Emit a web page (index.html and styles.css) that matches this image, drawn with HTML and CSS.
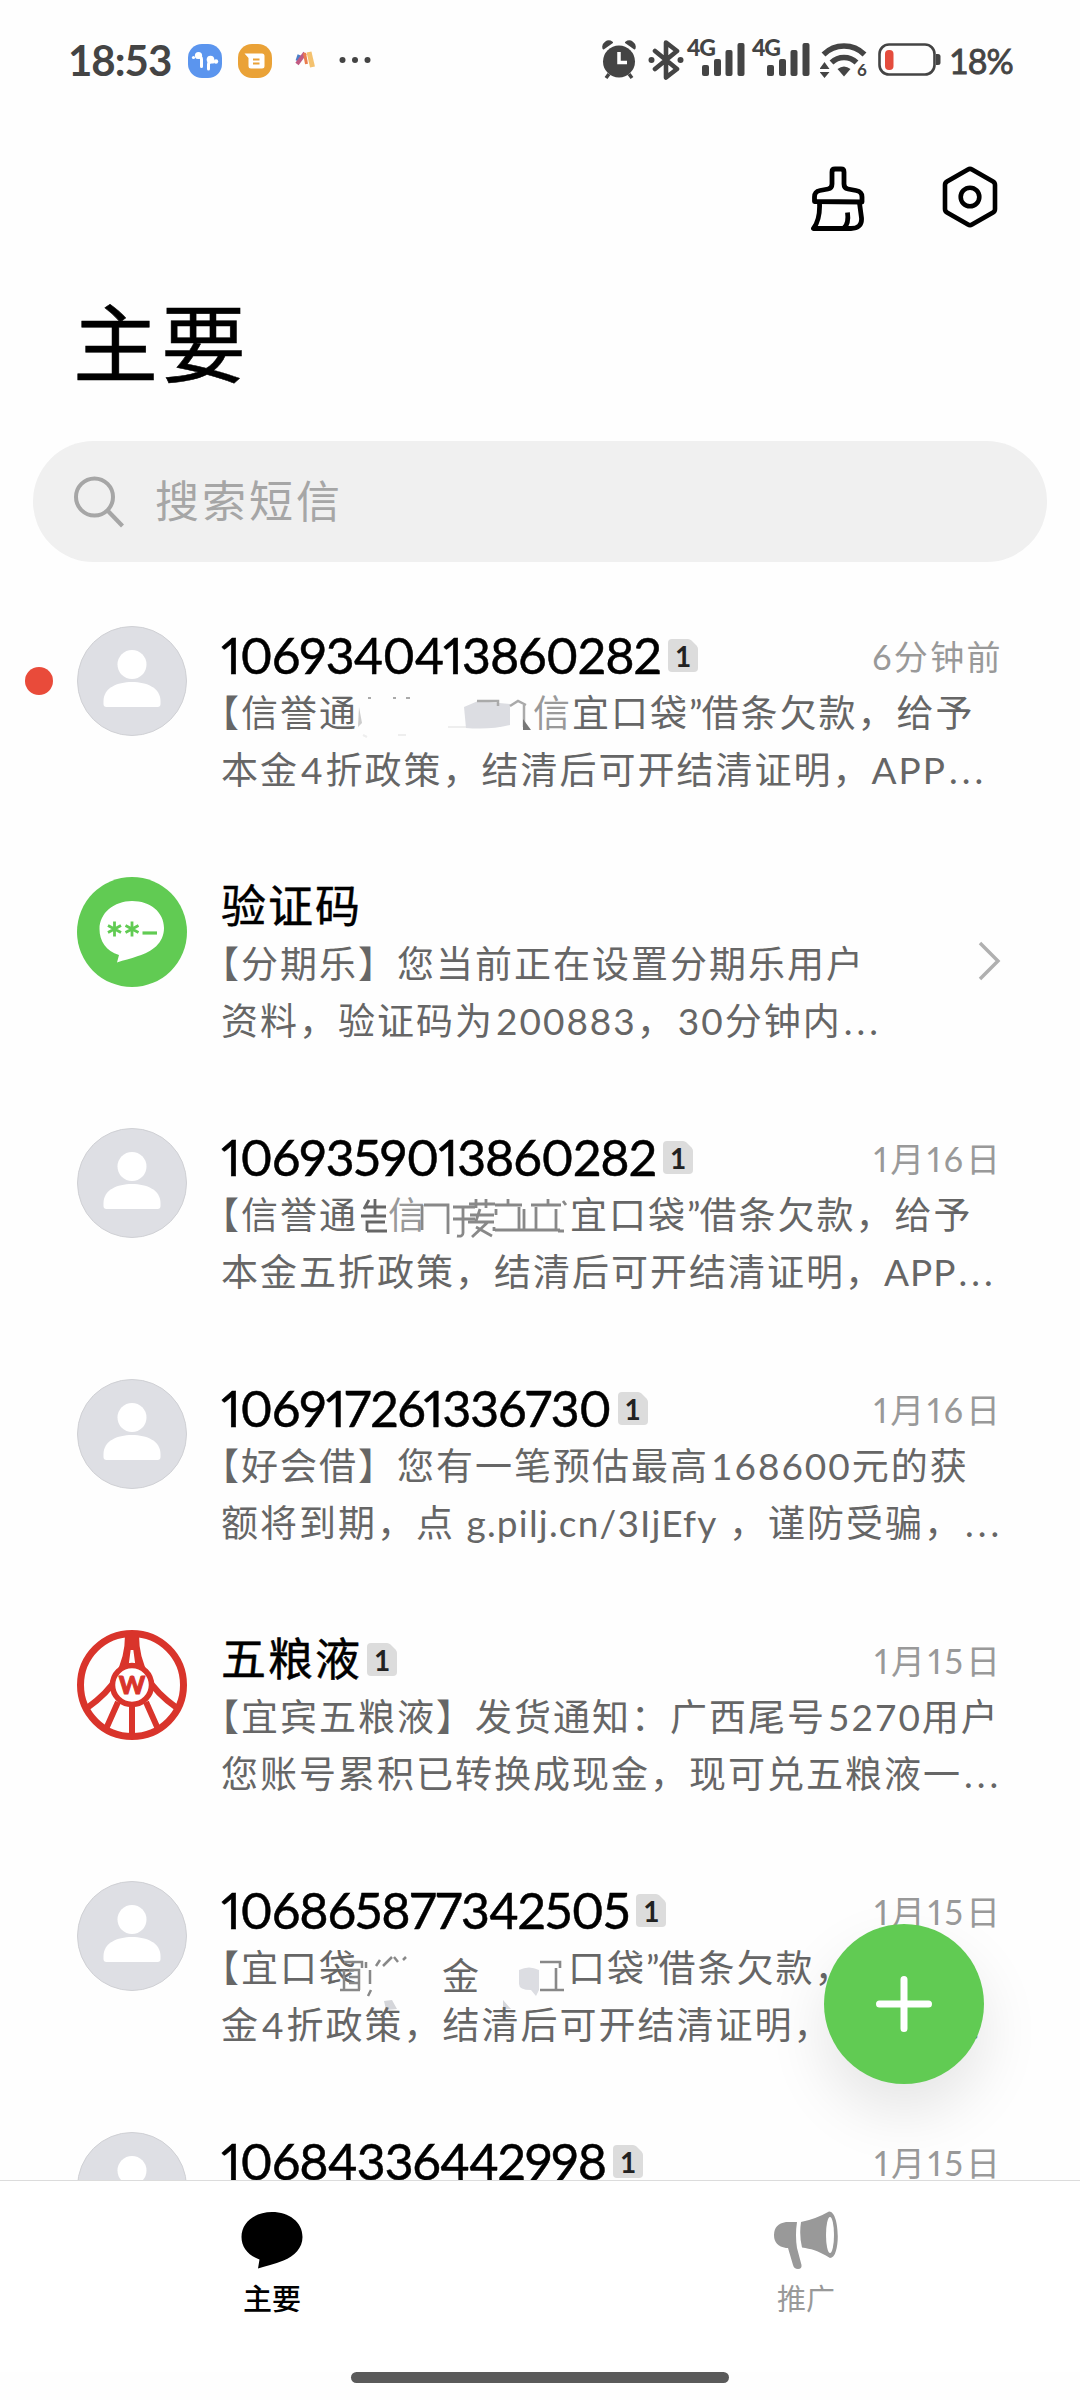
FILE: index.html
```html
<!DOCTYPE html>
<html lang="zh-CN">
  <head>
    <meta charset="UTF-8" />
    <meta name="viewport" content="width=device-width, initial-scale=1.0" />
    <title>短信</title>
    <link rel="stylesheet" href="styles.css">
  </head>
  <body>
    <!-- shared icons -->
    <svg class="defs" width="0" height="0">
      <symbol id="person" viewBox="0 0 110 110">
        <circle cx="55" cy="55" r="54.500" fill="#dedfe4" stroke="#cfd0d4" />
        <circle cx="55" cy="38.500" r="14.500" fill="#fff" />
        <path d="M26.500 75C26.500 62 40 56 55 56s28.500 6 28.500 19v3q0 3-3 3h-51q-3 0-3-3z" fill="#fff" />
      </symbol>
      <symbol id="signal" viewBox="0 0 58 40">
        <g fill="#444">
          <rect x="15" y="25" width="7" height="11" rx="2" />
          <rect x="27" y="19" width="7" height="17" rx="2" />
          <rect x="38.500" y="10" width="7" height="26" rx="2" />
          <rect x="50.500" y="3" width="7" height="33" rx="2" />
        </g>
      </symbol>
      <symbol id="sim" viewBox="0 0 30 33">
        <path d="M4 0h16q2 0 3.500 1.500l5 5Q30 8 30 10v19q0 4-4 4H4q-4 0-4-4V4q0-4 4-4z" fill="#dcdcdc" />
      </symbol>
    </svg>

    <div class="phone">
      <header class="status">
        <div class="status-left">
          <span class="clock">18:53</span>
          <svg class="app" width="34" height="34" viewBox="0 0 34 34">
            <rect width="34" height="34" rx="14" fill="#5b95ee" />
            <path d="M9 13h2.500q2 0 2 2.500V22.500M25 18h-2q-2.500 0-2.500 2.500V25" fill="none" stroke="#fff" stroke-width="3" stroke-linecap="round" />
            <circle cx="10.500" cy="11.500" r="3.600" fill="#fff" />
            <circle cx="22.500" cy="15.500" r="3.800" fill="#fff" />
            <circle cx="5.500" cy="13.500" r="1.600" fill="#fff" />
            <circle cx="28" cy="17.500" r="2.200" fill="#fff" />
          </svg>
          <svg class="app" width="34" height="34" viewBox="0 0 34 34">
            <rect width="34" height="34" rx="14" fill="#eaa237" />
            <path d="M6.500 9.500H24q2.500 0 2.500 2.500v10q0 2.500-2.500 2.500H13q-2.500 0-2.500-2.500v-8z" fill="#fff" />
            <path d="M15 15.500h6.500M15 19.500h6.500" stroke="#eaa237" stroke-width="1.800" />
          </svg>
          <svg class="app-small" width="20" height="20" viewBox="0 0 20 20">
            <path d="M2.500 11l2-6" stroke="#4b7fc8" stroke-width="4" />
            <path d="M2 14L10 3" stroke="#c05a82" stroke-width="4" />
            <path d="M9.500 3l2 11" stroke="#ea7d4d" stroke-width="3" />
            <path d="M14 2l3.500 15" stroke="#f4c26f" stroke-width="5" />
          </svg>
          <svg class="more" width="34" height="10" viewBox="0 0 34 10">
            <circle cx="4.500" cy="5" r="3" fill="#444" />
            <circle cx="17" cy="5" r="3" fill="#444" />
            <circle cx="29.500" cy="5" r="3" fill="#444" />
          </svg>
        </div>
        <div class="status-right">
          <svg class="alarm" width="34" height="40" viewBox="0 0 34 40">
            <circle cx="17" cy="21.500" r="16" fill="#444" />
            <path d="M1.500 8.500a5.500 5.500 0 0 1 8.500-6zM32.500 8.500a5.500 5.500 0 0 0-8.500-6z" fill="#444" stroke="#444" stroke-linejoin="round" stroke-width="2" />
            <path d="M7 34l-3 4M27 34l3 4" stroke="#444" stroke-width="3.500" />
            <path d="M17 12v10.500h8" fill="none" stroke="#fff" stroke-width="3.500" />
          </svg>
          <svg class="bluetooth" width="36" height="40" viewBox="0 0 36 40">
            <path d="M7 11l22 18-11 8.500V2.500L29 11 7 29" fill="none" stroke="#444" stroke-width="4.600" stroke-linejoin="round" stroke-linecap="round" />
            <circle cx="3.500" cy="20" r="3" fill="#444" />
            <circle cx="32.500" cy="20" r="3" fill="#444" />
          </svg>
          <div class="signal"><span class="net">4G</span><svg width="58" height="40"><use href="#signal" /></svg></div>
          <div class="signal"><span class="net">4G</span><svg width="58" height="40"><use href="#signal" /></svg></div>
          <svg class="wifi" width="48" height="40" viewBox="0 0 48 40">
            <path d="M3.500 14.500a29 29 0 0 1 41 0M11.500 22.500a18 18 0 0 1 25 0" fill="none" stroke="#444" stroke-width="5.500" />
            <path d="M17.500 29q6.500-5 13 0L24 36.500z" fill="#444" />
            <path d="M4.500 22l5 7h-10zM4.500 38l5-6h-10z" fill="#444" />
            <text class="wifi-num" x="37" y="36">6</text>
          </svg>
          <svg class="battery" width="64" height="34" viewBox="0 0 64 34">
            <rect x="1.500" y="1.500" width="55" height="30" rx="9.500" fill="none" stroke="#444" stroke-width="2.600" />
            <path d="M58 11h2q2.500 0 2.500 2.500v6q0 2.500-2.500 2.500h-2z" fill="#444" />
            <rect x="7" y="7" width="8.500" height="20" rx="4" fill="#e44c3d" />
          </svg>
          <span class="percent">18%</span>
        </div>
      </header>

      <div class="toolbar">
        <svg width="56" height="68" viewBox="0 0 56 68">
          <g fill="none" stroke="#000" stroke-width="4.800" stroke-linejoin="round">
            <path d="M3.500 36.500V32q0-5.500 5.500-6.500l8-1.500q4-.8 4-5V7q0-3 3-3h6q3 0 3 3v12q0 4.200 4 5l8 1.500q6 1 6 6.500v5z" />
            <path d="M8.500 38c.5 10-.5 18-6 25.500H40c7 0 11-3.500 10.500-10.500L48.500 38" />
            <path d="M36.500 47.500c1 7 0 13-4 16" />
          </g>
        </svg>
        <svg width="56" height="64" viewBox="0 0 56 64">
          <path d="M26 4.500q2-1.200 4 0l21 12q2 1.200 2 3.500v24q0 2.300-2 3.500l-21 12q-2 1.200-4 0l-21-12q-2-1.200-2-3.500V20q0-2.300 2-3.500z" fill="none" stroke="#000" stroke-width="4.600" />
          <circle cx="28" cy="32" r="9.300" fill="none" stroke="#000" stroke-width="4.600" />
        </svg>
      </div>

      <h1 class="title">主要</h1>

      <div class="search">
        <svg width="52" height="52" viewBox="0 0 52 52">
          <circle cx="20.500" cy="21" r="18.500" fill="none" stroke="#a6a6a6" stroke-width="4" />
          <path d="M33.500 34.500L48.500 50" stroke="#a6a6a6" stroke-width="4.200" />
        </svg>
        <span>搜索短信</span>
      </div>

      <ul class="list">
        <li class="item unread">
          <svg class="avatar"><use href="#person" /></svg>
          <div class="content">
            <div class="head">
              <span class="name">1069340413860282</span>
              <span class="badge"><svg width="30" height="33"><use href="#sim" /></svg><b>1</b></span>
              <span class="time">6分钟前</span>
            </div>
            <p class="line open">【信誉通<svg class="smudge" width="214" height="44" viewBox="0 0 214 44">
                <path d="M1 14l3 16-4 4z" fill="#ccc" />
                <path d="M10 4h3v2h-3zM35 4h3v2h-3zM48 4h4v2h-4z" fill="#aaa" />
                <path d="M5 42l4 2M40 42h8M90 34h30" stroke="#eee" stroke-width="2" />
                <path d="M106 14l14-6 32 3v21q-20 5-44 3z" fill="#dcdde2" />
                <path d="M119 8h21v5M152 13l8-5 8 4M166 12v22" fill="none" stroke="#aaa" stroke-width="2.500" />
                <path d="M165 26v11h8z" fill="#777" />
                <text class="smudge-text" x="175" y="34">信</text>
              </svg>宜口袋<span class="quote">”</span>借条欠款，给予</p>
            <p class="line">本金<span class="four">4</span>折政策，结清后可开结清证明，APP<span class="dots">...</span></p>
          </div>
        </li>

        <li class="item">
          <svg class="avatar" viewBox="0 0 110 110">
            <circle cx="55" cy="55" r="55" fill="#61cb53" />
            <path d="M55 24c18 0 32 11 32 27 0 15-12 24-26 28-8 3-14 4-21 6.500L42 78C29 74 22.500 64 22.500 52 22.500 36 37 24 55 24z" fill="#fff" />
            <path d="M37.500 44.500v15M31 48.500l13 7M44 48.500l-13 7M55 44.500v15M48.500 48.500l13 7M61.500 48.500l-13 7" stroke="#61cb53" stroke-width="2.800" />
            <path d="M65.500 56h14.500" stroke="#61cb53" stroke-width="3.200" />
          </svg>
          <div class="content narrow">
            <div class="head"><span class="name cn">验证码</span></div>
            <p class="line open">【分期乐】您当前正在设置分期乐用户</p>
            <p class="line">资料，验证码为<span class="num">200883</span>，<span class="num">30</span>分钟内<span class="dots">...</span></p>
          </div>
          <svg class="arrow" width="24" height="40" viewBox="0 0 24 40">
            <path d="M3 2l18 18L3 38" fill="none" stroke="#b0b0b0" stroke-width="3.500" />
          </svg>
        </li>

        <li class="item">
          <svg class="avatar"><use href="#person" /></svg>
          <div class="content">
            <div class="head">
              <span class="name">1069359013860282</span>
              <span class="badge"><svg width="30" height="33"><use href="#sim" /></svg><b>1</b></span>
              <span class="time date">1月16日</span>
            </div>
            <p class="line open">【信誉通<svg class="smudge" width="212" height="44" viewBox="0 0 212 44">
                <path d="M11 5l-5 9M8 12h20M17 4v17M3 21h25M9 36V27h18M9 36h20" fill="none" stroke="#666" stroke-width="2.800" />
                <text class="smudge-text" x="30" y="34">信</text>
                <path d="M64 10v25M66 10h24v29M95 12h22M95 24h22M105 12v26q0 4-6 3M137 10h27M137 35h42M150 4v6M161 12v22M166 14v20M178 12v23M173 10h30M178 35h24M190 4v6M198 14v20M205 6l3 4M200 36h6" fill="none" stroke="#888" stroke-width="2.800" />
                <path d="M111 9h26M118 4v9M128 4v9M112 20h24M122 14l-4 12M110 27h26M130 27l-16 15M118 32l16 9M138 14v6M136 32v4" fill="none" stroke="#888" stroke-width="2.800" />
              </svg>宜口袋<span class="quote">”</span>借条欠款，给予</p>
            <p class="line">本金五折政策，结清后可开结清证明，<span class="app-word">APP</span><span class="dots">...</span></p>
          </div>
        </li>

        <li class="item">
          <svg class="avatar"><use href="#person" /></svg>
          <div class="content">
            <div class="head">
              <span class="name">106917261336730</span>
              <span class="badge"><svg width="30" height="33"><use href="#sim" /></svg><b>1</b></span>
              <span class="time date">1月16日</span>
            </div>
            <p class="line open">【好会借】您有一笔预估最高<span class="num">168600</span>元的获</p>
            <p class="line">额将到期，点 <span class="link">g.pilj.cn/3IjEfy</span> ，谨防受骗，<span class="dots">...</span></p>
          </div>
        </li>

        <li class="item">
          <svg class="avatar" viewBox="0 0 110 110">
            <g fill="none" stroke="#d9342b">
              <circle cx="55" cy="55" r="51.500" stroke-width="7" />
              <path d="M51 5c0 32-14 54-41 73M59 5c0 32 14 54 41 73" stroke-width="6" />
              <path d="M54 6l-4 30M56 6l4 30" stroke-width="3" />
              <circle cx="55" cy="55" r="19.500" stroke-width="5.500" fill="#fff" />
              <path d="M55 75v31M41 72L29 99M69 72l12 27" stroke-width="6" />
            </g>
            <path d="M50 5h10l1 15h-12z" fill="#d9342b" />
            <text class="logo-w" x="55" y="64" text-anchor="middle">W</text>
          </svg>
          <div class="content">
            <div class="head">
              <span class="name cn">五粮液</span>
              <span class="badge"><svg width="30" height="33"><use href="#sim" /></svg><b>1</b></span>
              <span class="time date">1月15日</span>
            </div>
            <p class="line open">【宜宾五粮液】发货通知：广西尾号<span class="num">5270</span>用户</p>
            <p class="line">您账号累积已转换成现金，现可兑五粮液一<span class="dots">...</span></p>
          </div>
        </li>

        <li class="item">
          <svg class="avatar"><use href="#person" /></svg>
          <div class="content">
            <div class="head">
              <span class="name">106865877342505</span>
              <span class="badge"><svg width="30" height="33"><use href="#sim" /></svg><b>1</b></span>
              <span class="time date">1月15日</span>
            </div>
            <!-- svg starts right after 袋 -->
            <p class="line open">【宜口袋<svg class="smudge tall" width="210" height="58" viewBox="0 0 210 58">
                <path d="M-14 10h18v6M-14 18v20M-9 18h10v20M-18 38h20M-9 25h10M-9 31h10M8 10v6M12 18v14M13 38l-3 6M18 14l4-6M25 14l9-9M40 10l-4-5M45 8l3-3" fill="none" stroke="#888" stroke-width="2.500" />
                <path d="M26 49l8-1 5 9-11 1zM145 48l8 9h-8z" fill="#d5d6da" />
                <text class="smudge-text dark" x="84" y="38">金</text>
                <path d="M161 18q10-5 20 0v20l-3 6-5-6q-12 0-12-6z" fill="#dcdde2" />
                <path d="M182 10h20v6M198 16v22M182 38h24" fill="none" stroke="#888" stroke-width="2.600" />
              </svg>口袋<span class="quote">”</span>借条欠款，</p>
            <p class="line">金<span class="four">4</span>折政策，结清后可开结清证明，<span class="app-word">APP给</span><span class="dots">...</span></p>
          </div>
        </li>

        <li class="item">
          <svg class="avatar"><use href="#person" /></svg>
          <div class="content">
            <div class="head">
              <span class="name">10684336442998</span>
              <span class="badge"><svg width="30" height="33"><use href="#sim" /></svg><b>1</b></span>
              <span class="time date">1月15日</span>
            </div>
          </div>
        </li>
      </ul>

      <nav class="tabs">
        <div class="tab active">
          <svg width="66" height="60" viewBox="0 0 66 60">
            <path d="M33 2c17 0 30.500 10 30.500 25 0 11-8 19-19 23.500-9 3.500-18 5.500-25.500 8l1.500-9C9 45.500 2.500 37 2.500 27 2.500 12 16 2 33 2z" />
          </svg>
          <span>主要</span>
        </div>
        <div class="tab">
          <svg width="66" height="60" viewBox="0 0 66 60">
            <path d="M13 12h11q-2 13 0 26l4.500 17q.5 4-3.500 4t-5-4l-5-17h-2Q1 36 1 25t12-13z" fill="#999" />
            <path d="M28 12Q43 9 56 1.500C67 1 68 48 57 48 44 40 38 39 29 37.500Q26 25 28 12z" fill="#999" />
            <ellipse cx="57" cy="25" rx="4" ry="18" fill="#fff" />
          </svg>
          <span>推广</span>
        </div>
      </nav>
      <div class="home"></div>

      <div class="fab">
        <svg width="56" height="56" viewBox="0 0 56 56">
          <path d="M28 3.500v49M3.500 28h49" stroke="#fff" stroke-width="7" stroke-linecap="round" />
        </svg>
      </div>
    </div>
  </body>
</html>
```
FILE: styles.css
```css
* {
  box-sizing: border-box;
}

body {
  margin: 0;
  background: #fefefe;
  font-family: Lato, "Noto Sans CJK SC", sans-serif;
  color: #000;
}

.defs {
  position: absolute;
}

.phone {
  position: relative;
  width: 1080px;
  height: 2400px;
  overflow: hidden;
  display: flex;
  flex-direction: column;
}

/* status bar */
.status {
  height: 120px;
  padding: 0 68px;
  display: flex;
  justify-content: space-between;
  color: #444;
}

.status-left,
.status-right {
  display: flex;
  align-items: center;
}

.clock {
  width: 104px;
  font-size: 42px;
  font-weight: bold;
  letter-spacing: -1px;
}

.app {
  margin: 2px 0 0 16px;
}

.app-small {
  margin-left: 23px;
}

.more {
  margin-left: 23px;
}

.bluetooth {
  margin-left: 12px;
}

.signal {
  position: relative;
  width: 58px;
  height: 40px;
  margin-left: 3px;
}

.signal + .signal {
  margin-left: 7px;
}

.net {
  position: absolute;
  left: 0;
  top: -4px;
  font-size: 23px;
  line-height: 23px;
  font-weight: 900;
  letter-spacing: -1px;
}

.wifi {
  margin-left: 10px;
}

.wifi-num {
  font-size: 17px;
  font-weight: bold;
  fill: #444;
}

.battery {
  margin-left: 10px;
}

.percent {
  width: 63px;
  margin-left: 7px;
  font-size: 34px;
  letter-spacing: -1px;
  white-space: nowrap;
  -webkit-text-stroke: 0.8px #444;
}

/* top */
.toolbar {
  height: 156px;
  padding: 45px 82px 0 0;
  display: flex;
  justify-content: flex-end;
  gap: 75px;
}

.title {
  height: 165px;
  margin: 0;
  padding-left: 73px;
  font-size: 85px;
  line-height: 134px;
  font-weight: normal;
  letter-spacing: 3px;
  -webkit-text-stroke: 0.5px #000;
}

.search {
  height: 121px;
  margin: 0 33px;
  padding: 0 0 5px 41px;
  border-radius: 61px;
  background: #f0f0f0;
  display: flex;
  align-items: center;
  gap: 29px;
  font-size: 44px;
  letter-spacing: 3px;
  color: #a6a6a6;
}

.search svg {
  margin-top: 5px;
}

/* message list */
.list {
  height: 1618px;
  margin: 0;
  padding: 64px 0 0;
  overflow: hidden;
  list-style: none;
}

.item {
  position: relative;
  height: 251px;
  padding: 0 79px 0 77px;
  display: flex;
}

.unread::before {
  content: "";
  position: absolute;
  left: 25px;
  top: 41px;
  width: 28px;
  height: 28px;
  border-radius: 50%;
  background: #e94b3a;
}

.avatar {
  flex: none;
  width: 110px;
  height: 110px;
}

.content {
  width: 780px;
  margin-left: 34px;
}

.narrow {
  width: 758px;
}

.head {
  height: 58px;
  display: flex;
  align-items: center;
}

.name {
  font-size: 50px;
  line-height: 58px;
  letter-spacing: -0.9px;
  font-variant-numeric: proportional-nums;
  -webkit-text-stroke: 0.5px #000;
}

.cn {
  margin-right: -2px;
  font-size: 45px;
  letter-spacing: 2px;
}

.badge {
  position: relative;
  width: 30px;
  height: 33px;
  margin-left: 7px;
}

.badge b {
  position: absolute;
  left: 0;
  top: 0;
  width: 30px;
  text-align: center;
  font-size: 28px;
  line-height: 34px;
  color: #222;
}

.time {
  margin: 0 -2px 0 auto;
  font-size: 34px;
  letter-spacing: 2.4px;
  font-variant-numeric: proportional-nums;
  color: #999;
}

.date {
  letter-spacing: 3px;
}

.line {
  height: 57px;
  margin: 0;
  font-size: 37px;
  line-height: 57px;
  letter-spacing: 2px;
  white-space: nowrap;
  color: #666;
}

.open {
  margin-left: -19px;
}

.quote {
  letter-spacing: -1px;
}

.dots {
  margin-left: 2px;
  letter-spacing: 4px;
}

.num {
  margin-left: 2px;
}

.four {
  margin: 0 1px 0 2px;
}

.app-word {
  letter-spacing: 1px;
}

.link {
  letter-spacing: 1.2px;
}

.smudge {
  overflow: visible;
  height: 44px;
  vertical-align: -10px;
}

.smudge.tall {
  height: 58px;
  margin: -10px 0;
  vertical-align: -18px;
}

.smudge-text {
  font-size: 37px;
  fill: #999;
}

.smudge-text.dark {
  fill: #666;
}

.logo-w {
  font-size: 25px;
  font-weight: 900;
  letter-spacing: 0;
  fill: #d9342b;
  stroke: #d9342b;
  stroke-width: 1px;
}

.arrow {
  align-self: flex-start;
  margin-top: 64px;
}

/* bottom */
.tabs {
  height: 192px;
  padding: 29px 7px 0 5px;
  border-top: 1px solid #dcdcdc;
  background: #fff;
  display: flex;
}

.tab {
  flex: 1;
  display: flex;
  flex-direction: column;
  align-items: center;
  font-size: 29px;
  line-height: 58px;
  color: #999;
}

.tab.active {
  color: #000;
  font-weight: 500;
}

.home {
  width: 378px;
  height: 11px;
  margin: 0 auto;
  border-radius: 6px;
  background: #5a5a5a;
}

.fab {
  position: absolute;
  left: 824px;
  top: 1924px;
  width: 160px;
  height: 160px;
  border-radius: 50%;
  background: #61cb53;
  box-shadow: 0 28px 60px rgba(0, 0, 0, 0.1);
  display: flex;
  align-items: center;
  justify-content: center;
}
```
